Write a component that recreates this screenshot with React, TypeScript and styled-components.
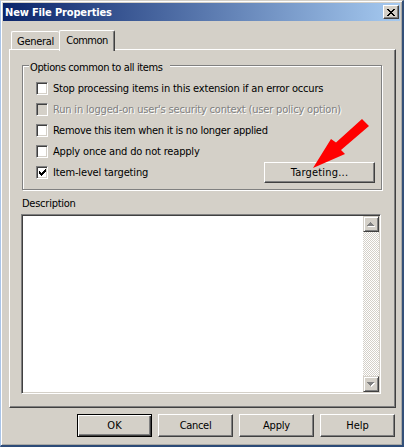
import React from "react";
import styled, { createGlobalStyle, css } from "styled-components";

const face = "#d4d0c8";
const shadow = "#808080";
const dark = "#404040";

const GlobalStyle = createGlobalStyle`
  *, *::before, *::after { box-sizing: border-box; }
  body {
    margin: 0;
    overflow: hidden;
    background: ${face};
    font: 11px/15px "DejaVu Sans Condensed", "DejaVu Sans", sans-serif;
    font-stretch: condensed;
    color: #000;
  }
`;

const raised = css`
  background: ${face};
  border: 1px solid;
  border-color: #fff ${dark} ${dark} #fff;
  box-shadow: inset -1px -1px 0 ${shadow};
`;

const Window = styled.main`
  width: 404px;
  height: 447px;
  padding: 2px 1px 0 1px;
  display: flex;
  flex-direction: column;
  background: ${face};
  border: solid;
  border-width: 1px 2px 2px 1px;
  border-color: ${face} #345078 #2d4b78 #a9c4e8;
  box-shadow: inset 1px 1px 0 #fff, inset -1px -1px 0 #aaa9a5;
`;

const TitleBar = styled.header`
  display: flex;
  align-items: center;
  justify-content: space-between;
  height: 18px;
  margin: 0 1px;
  padding: 0 1px 0 2px;
  color: #fff;
  font-weight: bold;
  background: linear-gradient(90deg, #0a246a, #a6caf0);
`;

const CloseButton = styled.button`
  ${raised}
  display: flex;
  align-items: center;
  justify-content: center;
  width: 16px;
  height: 14px;
  padding: 0;
`;

const Text = styled.span<{ $spacing?: number }>`
  white-space: pre;
  letter-spacing: ${(p) => p.$spacing ?? 0}px;
`;

const Tabs = styled.div`
  display: flex;
  align-items: flex-end;
  height: 22px;
  margin: 8px 0 -2px 9px;
`;

const Tab = styled.div<{ $active?: boolean }>`
  position: relative;
  display: flex;
  justify-content: center;
  width: ${(p) => (p.$active ? 56 : 48)}px;
  height: ${(p) => (p.$active ? 21 : 18)}px;
  margin-bottom: ${(p) => (p.$active ? 0 : 2)}px;
  padding-top: 2px;
  background: ${face};
  border: 1px solid #fff;
  border-width: 1px ${(p) => (p.$active ? 1 : 0)}px 0 1px;
  border-right-color: ${dark};
  border-radius: 2px 2px 0 0;
  box-shadow: ${(p) => (p.$active ? `inset -1px 0 0 ${shadow}` : "none")};
`;

const Page = styled.section`
  ${raised}
  width: 387px;
  height: 359px;
  margin-left: 7px;
  padding: 15px 0 0 12px;
`;

const Group = styled.section`
  width: 360px;
  height: 125px;
  padding: 0 6px 0 13px;
  border: 1px solid ${shadow};
  box-shadow: 1px 1px 0 #fff, inset 1px 1px 0 #fff;
`;

const Legend = styled.h2`
  width: 141px;
  height: 15px;
  margin: -7px 0 4px -7px;
  padding: 1px 0 0 1px;
  font: inherit;
  background: ${face};
`;

const Option = styled.label<{ $disabled?: boolean }>`
  display: flex;
  align-items: center;
  gap: 5px;
  height: 21px;
  color: ${(p) => (p.$disabled ? shadow : "#000")};
  text-shadow: ${(p) => (p.$disabled ? "1px 1px 0 #fff" : "none")};
`;

const Box = styled.span<{ $disabled?: boolean }>`
  display: flex;
  width: 12px;
  height: 13px;
  background: ${(p) => (p.$disabled ? face : "#fff")};
  border: 1px solid;
  border-color: ${shadow} #fff #fff ${shadow};
  box-shadow: inset 1px 1px 0 ${dark}, inset -1px -1px 0 ${face};
`;

const OptionRow = styled.div`
  display: flex;
  justify-content: space-between;
`;

const Button = styled.button<{ $wide?: boolean; $primary?: boolean }>`
  ${raised}
  position: relative;
  display: flex;
  justify-content: center;
  align-items: center;
  width: ${(p) => (p.$wide ? 111 : 75)}px;
  height: ${(p) => (p.$wide ? 21 : 23)}px;
  padding: 0 0 1px;
  font: inherit;
  color: inherit;
  ${(p) => p.$primary && css`
    border-color: #000;
    box-shadow: inset 1px 1px 0 #fff, inset -1px -1px 0 ${dark}, inset -2px -2px 0 ${shadow};
  `}
`;

const Arrow = styled.svg`
  position: absolute;
  left: 48px;
  top: -44px;
  width: 58px;
  height: 51px;
`;

const Description = styled.div`
  margin-top: 6px;
`;

const TextArea = styled.div`
  display: flex;
  justify-content: flex-end;
  width: 360px;
  height: 180px;
  margin: 3px 0 0 -1px;
  padding: 1px;
  background: #fff;
  border: 1px solid;
  border-color: ${shadow} #fff #fff ${shadow};
  box-shadow: inset 1px 1px 0 ${dark}, inset -1px -1px 0 ${face};
`;

const ScrollBar = styled.div`
  display: flex;
  flex-direction: column;
  justify-content: space-between;
  width: 16px;
  background: repeating-conic-gradient(${face} 0 25%, #fff 0 50%) 0 0 / 2px 2px;
`;

const ScrollButton = styled.div`
  display: flex;
  align-items: center;
  justify-content: center;
  height: 16px;
  background: ${face};
  border: 1px solid;
  border-color: ${face} ${dark} ${dark} ${face};
  box-shadow: inset 1px 1px 0 #fff, inset -1px -1px 0 ${shadow};
`;

const Footer = styled.footer`
  display: flex;
  gap: 6px;
  margin: 6px 0 0 75px;
`;

const options = [
  { label: "Stop processing items in this extension if an error occurs", spacing: -0.2 },
  { label: "Run in logged-on user's security context (user policy option)", spacing: -0.18, disabled: true },
  { label: "Remove this item when it is no longer applied", spacing: -0.28 },
  { label: "Apply once and do not reapply", spacing: -0.18 },
];

export default function App() {
  return (
    <>
      <GlobalStyle />
      <Window>
        <TitleBar>
          <Text $spacing={-0.15}>New File Properties</Text>
          <CloseButton aria-label="Close">
            <svg width="8" height="7" viewBox="0 0 8 7" shapeRendering="crispEdges">
              <path d="M0 0h2v1h1v1h2V1h1V0h2v1H7v1H6v1H5v1h1v1h1v1h1v1H6V6H5V5H3v1H2v1H0V6h1V5h1V4h1V3H2V2H1V1H0z" />
            </svg>
          </CloseButton>
        </TitleBar>
        <Tabs>
          <Tab><Text $spacing={-0.3}>General</Text></Tab>
          <Tab $active><Text $spacing={-0.55}>Common</Text></Tab>
        </Tabs>
        <Page>
          <Group>
            <Legend><Text $spacing={-0.38}>Options common to all items</Text></Legend>
            {options.map((o) => (
              <Option key={o.label} $disabled={o.disabled}>
                <Box $disabled={o.disabled} />
                <Text $spacing={o.spacing}>{o.label}</Text>
              </Option>
            ))}
            <OptionRow>
              <Option>
                <Box>
                  <svg width="10" height="11" viewBox="0 0 10 11" shapeRendering="crispEdges">
                    <path d="M2 4h1v1h1v1h1V5h1V4h1V3h1V2h1v3H8v1H7v1H6v1H5v1H4V8H3V7H2z" />
                  </svg>
                </Box>
                <Text $spacing={-0.15}>Item-level targeting</Text>
              </Option>
              <Button $wide>
                <Text $spacing={0.2}>Targeting...</Text>
                <Arrow viewBox="0 0 58 51">
                  <path d="M0 49L18 20L23 23.5L49 0L56 7L28 31L32 35Z" fill="#f00" />
                </Arrow>
              </Button>
            </OptionRow>
          </Group>
          <Description><Text $spacing={-0.25}>Description</Text></Description>
          <TextArea>
            <ScrollBar>
              <ScrollButton>
                <svg width="8" height="5" viewBox="0 0 8 5" shapeRendering="crispEdges">
                  <path d="M1 5h7V4H1z" fill="#fff" />
                  <path d="M0 4h7V3H6V2H5V1H4V0H3v1H2v1H1v1H0z" fill="#808080" />
                </svg>
              </ScrollButton>
              <ScrollButton>
                <svg width="8" height="5" viewBox="0 0 8 5" shapeRendering="crispEdges">
                  <path d="M1 1h7v1H7v1H6v1H5v1H4V4H3z" fill="#fff" />
                  <path d="M0 0h7v1H6v1H5v1H4v1H3V3H2V2H1V1H0z" fill="#808080" />
                </svg>
              </ScrollButton>
            </ScrollBar>
          </TextArea>
        </Page>
        <Footer>
          <Button $primary><Text>OK</Text></Button>
          <Button><Text $spacing={-0.3}>Cancel</Text></Button>
          <Button><Text $spacing={-0.2}>Apply</Text></Button>
          <Button><Text>Help</Text></Button>
        </Footer>
      </Window>
    </>
  );
}
